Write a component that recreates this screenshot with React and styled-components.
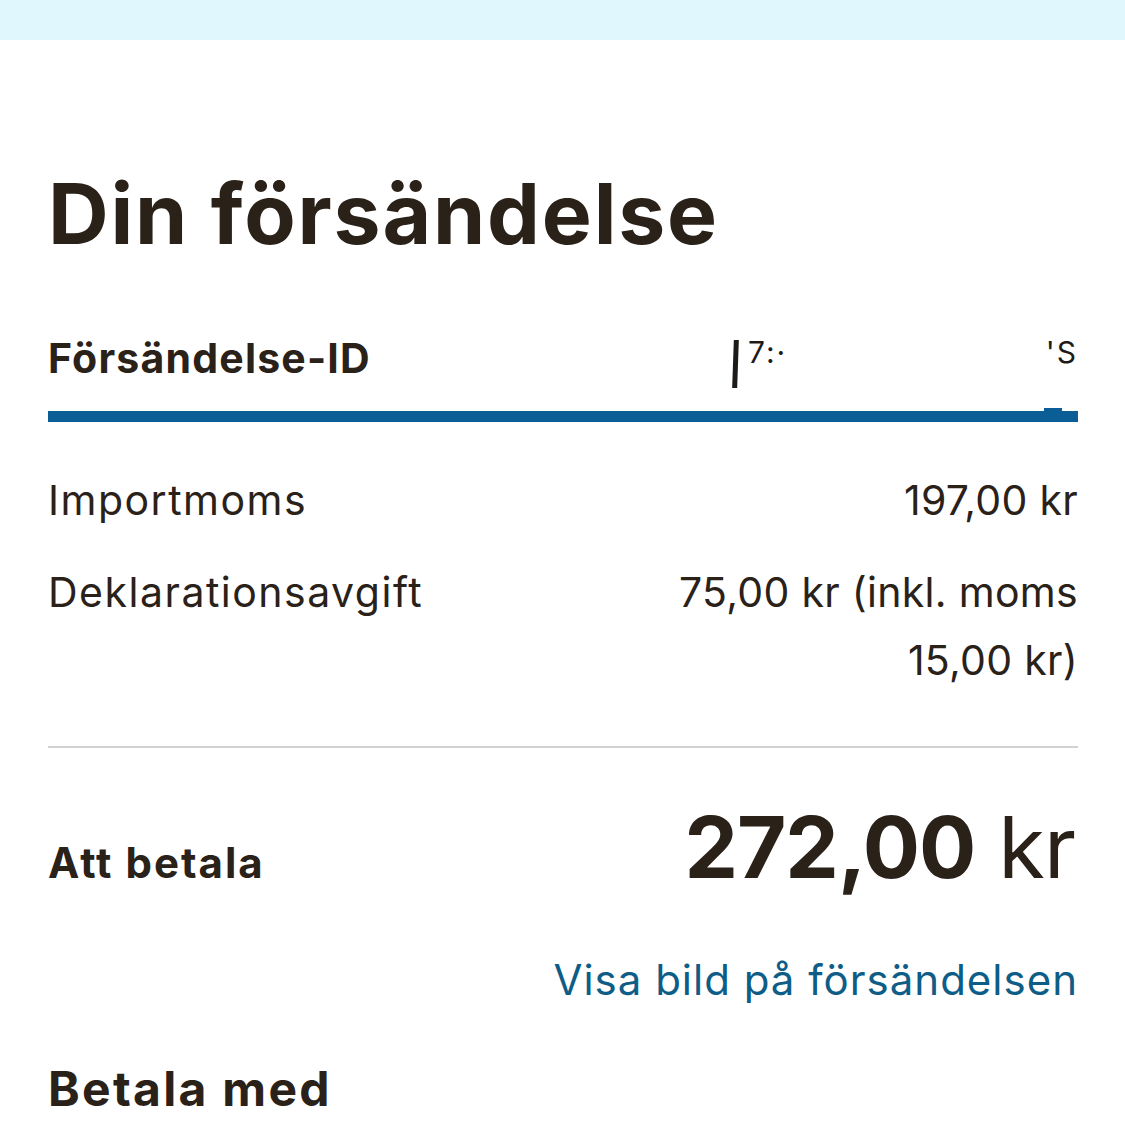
import React from "react";
import styled, { createGlobalStyle } from "styled-components";

const Global = createGlobalStyle`
  html, body { margin: 0; padding: 0; background: #ffffff; }
  body { font-family: "Inter", "Lato", "Liberation Sans", sans-serif; color: #2a2119; }
`;

const Page = styled.div`
  width: 1125px;
  min-height: 1125px;
  background: #ffffff;
  overflow: hidden;
`;

const TopBand = styled.div`
  height: 40px;
  background: #e0f7fd;
`;

const Content = styled.main`
  padding: 0 47px 0 48px;
  display: flex;
  flex-direction: column;
`;

const Title = styled.h1`
  margin: 124px 0 0 0;
  font-size: 84px;
  line-height: 100px;
  font-weight: 700;
  letter-spacing: 1.8px;
  color: #2a2119;
`;

const IdRow = styled.div`
  margin-top: 64px;
  display: flex;
  align-items: center;
  justify-content: space-between;
  height: 60px;
  padding-bottom: 23px;
  border-bottom: 11px solid #0b5e95;
  position: relative;
  &::after {
    content: "";
    position: absolute;
    right: 16px;
    bottom: -11px;
    width: 18px;
    height: 14px;
    background: #0b5e95;
  }
`;

const IdLabel = styled.span`
  font-size: 41px;
  font-weight: 700;
  letter-spacing: 1.2px;
`;

const IdValue = styled.span`
  width: 345px;
  display: flex;
  justify-content: space-between;
  align-items: center;
  font-size: 40px;
  color: #1d1a17;
`;

const Redacted = styled.span`
  display: flex;
  align-items: center;
  gap: 10px;
`;

const Bar = styled.span`
  display: inline-block;
  width: 5px;
  height: 48px;
  background: #1d1a17;
  transform: translateY(6px) skewX(-2deg);
`;

const Frag = styled.span`
  font-size: 30px;
  line-height: 1;
  letter-spacing: 2px;
  transform: translateY(-6px);
`;

const Lines = styled.div`
  margin-top: 44px;
  display: flex;
  flex-direction: column;
  gap: 24px;
  padding-bottom: 52px;
  border-bottom: 2px solid #d2d2d2;
`;

const Line = styled.div`
  display: flex;
  justify-content: space-between;
  align-items: flex-start;
  font-size: 41px;
  line-height: 68px;
  letter-spacing: 1.5px;
`;

const Label = styled.span`
  font-weight: 400;
`;

const Value = styled.span`
  text-align: right;
  max-width: 420px;
  letter-spacing: 0.3px;
`;

const TotalRow = styled.div`
  margin-top: 57px;
  display: flex;
  justify-content: space-between;
  align-items: baseline;
`;

const TotalLabel = styled.span`
  font-size: 42px;
  font-weight: 700;
  letter-spacing: 2px;
`;

const Amount = styled.span`
  font-size: 85px;
  line-height: 1;
  letter-spacing: -1px;
  margin-right: 3px;
`;

const AmountNum = styled.span`
  font-weight: 700;
`;

const Unit = styled.span`
  font-weight: 400;
`;

const LinkRow = styled.div`
  margin-top: 64px;
  display: flex;
  justify-content: flex-end;
`;

const Link = styled.a`
  font-size: 42px;
  letter-spacing: 1px;
  color: #0e5d87;
  text-decoration: none;
  cursor: pointer;
`;

const Section = styled.h2`
  margin: 60px 0 0 0;
  font-size: 48px;
  font-weight: 700;
  letter-spacing: 2.3px;
  line-height: 1;
`;

export default function App() {
  return (
    <Page>
      <Global />
      <TopBand />
      <Content>
        <Title>Din försändelse</Title>
        <IdRow>
          <IdLabel>Försändelse-ID</IdLabel>
          <IdValue>
            <Redacted>
              <Bar />
              <Frag>7:·</Frag>
            </Redacted>
            <Frag>'S</Frag>
          </IdValue>
        </IdRow>
        <Lines>
          <Line>
            <Label>Importmoms</Label>
            <Value>197,00 kr</Value>
          </Line>
          <Line>
            <Label>Deklarationsavgift</Label>
            <Value>75,00 kr (inkl. moms 15,00 kr)</Value>
          </Line>
        </Lines>
        <TotalRow>
          <TotalLabel>Att betala</TotalLabel>
          <Amount>
            <AmountNum>272,00</AmountNum> <Unit>kr</Unit>
          </Amount>
        </TotalRow>
        <LinkRow>
          <Link>Visa bild på försändelsen</Link>
        </LinkRow>
        <Section>Betala med</Section>
      </Content>
    </Page>
  );
}
